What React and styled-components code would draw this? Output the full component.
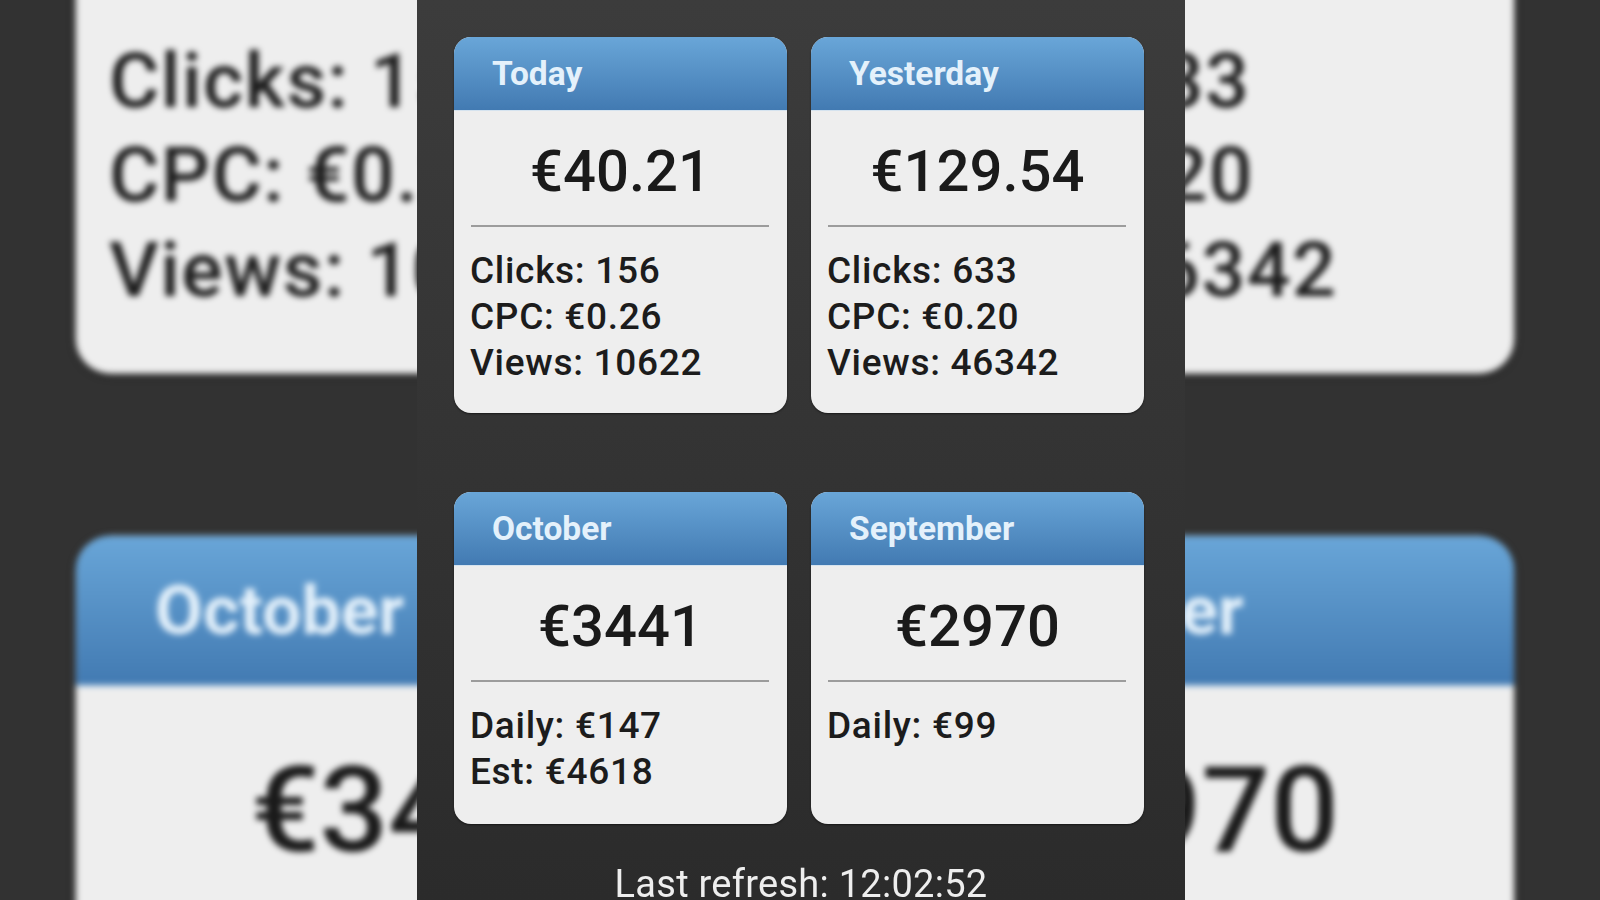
import React from "react";
import styled, { createGlobalStyle } from "styled-components";

const GlobalStyle = createGlobalStyle`
  html, body {
    margin: 0;
    padding: 0;
    background: #333333;
    font-family: Roboto, "Liberation Sans", sans-serif;
  }
`;

const Page = styled.div`
  position: relative;
  width: 1600px;
  height: 900px;
  overflow: hidden;
  background: #323232;
`;

// same board again, blown up and blurred behind the phone shot
const Backdrop = styled.div`
  position: absolute;
  inset: 0;
  padding: 37px 0 0 454px;
  transform-origin: 0 0;
  transform: translate(-871px, -473px) scale(2.085, 2.05);
  filter: blur(1.6px);
`;

const Panel = styled.main`
  position: absolute;
  top: 0;
  left: 417px;
  width: 768px;
  height: 900px;
  box-sizing: border-box;
  padding: 37px 41px 0 37px;
  background: linear-gradient(to bottom, #3c3c3c, #2b2b2b);
  filter: blur(0.6px);
`;

const Board = styled.div`
  display: grid;
  grid-template-columns: 333px 333px;
  grid-template-rows: 376px 332px;
  column-gap: 24px;
  row-gap: 79px;
  width: 690px;
`;

const Card = styled.section`
  display: flex;
  flex-direction: column;
  border-radius: 17px;
  overflow: hidden;
  background: #eeeeee;
  box-shadow: 0 1px 2px rgba(0, 0, 0, 0.5);
`;

const CardHeader = styled.h2`
  margin: 0;
  height: 74px;
  box-sizing: border-box;
  padding: 0 0 1px 38px;
  display: flex;
  align-items: center;
  flex-shrink: 0;
  background: linear-gradient(to bottom, #69a6d8, #427ab2);
  border-bottom: 1px solid #d5e3ef;
  color: #e4f1fb;
  font-size: 33.5px;
  font-weight: 700;
`;

const Amount = styled.div`
  height: 114px;
  box-sizing: border-box;
  padding-top: 6px;
  flex-shrink: 0;
  display: flex;
  align-items: center;
  justify-content: center;
  color: #1a1a1a;
  font-size: 58px;
  font-weight: 500;
`;

const Divider = styled.hr`
  margin: 0 18px 0 17px;
  border: 0;
  height: 2px;
  flex-shrink: 0;
  background: #9c9c9c;
`;

const Details = styled.div`
  padding: 21px 16px 0;
  color: #1c1c1c;
  font-size: 37px;
  font-weight: 500;
  letter-spacing: 0.7px;
  line-height: 46px;
`;

const LastRefresh = styled.p`
  margin: 38px -41px 0 -37px;
  text-align: center;
  color: #eeeeee;
  font-size: 38px;
  letter-spacing: 0.27px;
  line-height: 44px;
`;

const cards = [
  { title: "Today", amount: "€40.21", lines: ["Clicks: 156", "CPC: €0.26", "Views: 10622"] },
  { title: "Yesterday", amount: "€129.54", lines: ["Clicks: 633", "CPC: €0.20", "Views: 46342"] },
  { title: "October", amount: "€3441", lines: ["Daily: €147", "Est: €4618"] },
  { title: "September", amount: "€2970", lines: ["Daily: €99"] },
];

const Dashboard = () => (
  <Board>
    {cards.map((card) => (
      <Card key={card.title}>
        <CardHeader>{card.title}</CardHeader>
        <Amount>{card.amount}</Amount>
        <Divider />
        <Details>
          {card.lines.map((line) => (
            <div key={line}>{line}</div>
          ))}
        </Details>
      </Card>
    ))}
  </Board>
);

export default function App() {
  return (
    <Page>
      <GlobalStyle />
      <Backdrop aria-hidden="true">
        <Dashboard />
      </Backdrop>
      <Panel>
        <Dashboard />
        <LastRefresh>Last refresh: 12:02:52</LastRefresh>
      </Panel>
    </Page>
  );
}
